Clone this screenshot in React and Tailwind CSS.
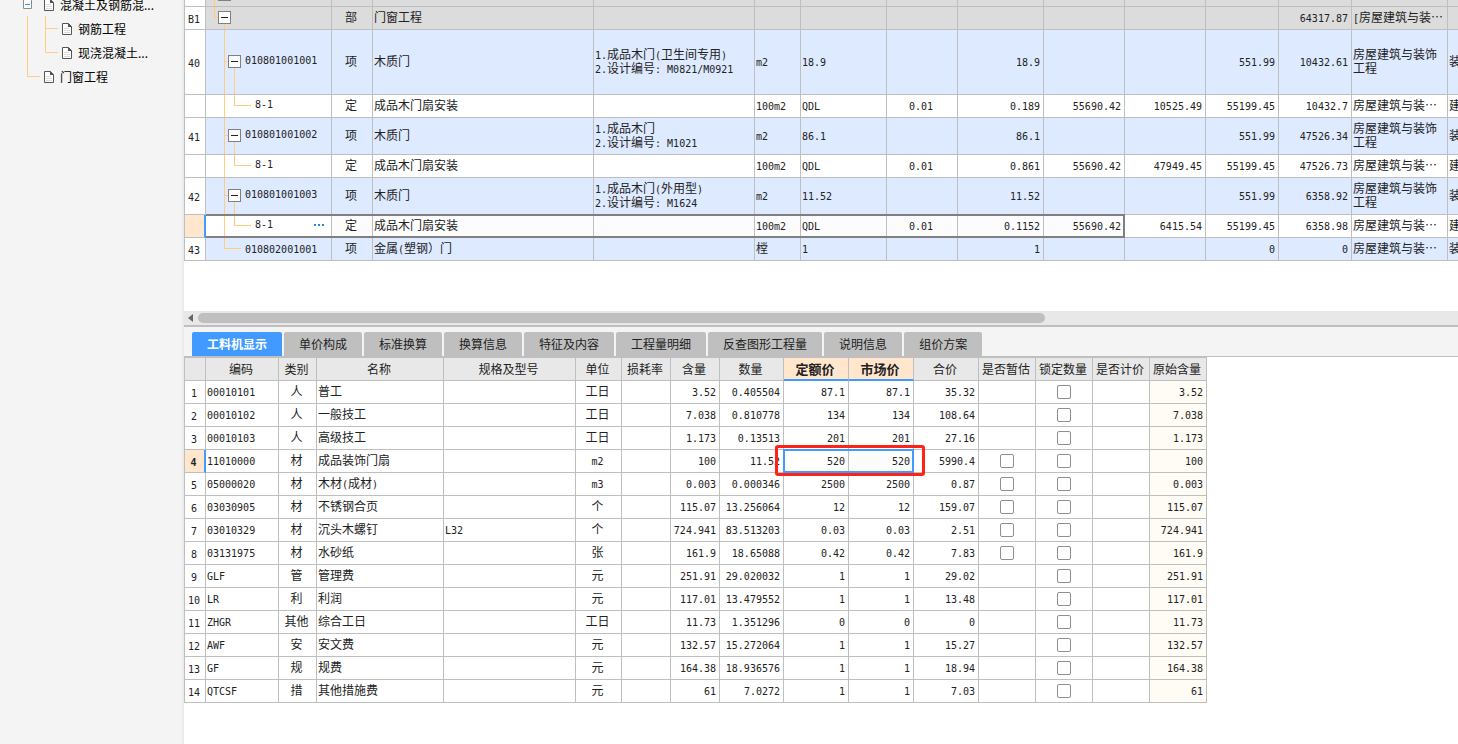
// src/App.jsx
import { Fragment } from "react";

const sections = [
  {
    no: "40", code: "010801001001", name: "木质门", feature: ["1.成品木门(卫生间专用)", "2.设计编号: M0821/M0921"], height: "h-[65px]",
    unit: "m2", qty: "18.9", total: "18.9", price: "551.99", sum: "10432.61",
    child: { total: "0.189", base: "55690.42", amount: "10525.49", price: "55199.45", sum: "10432.7" },
  },
  {
    no: "41", code: "010801001002", name: "木质门", feature: ["1.成品木门", "2.设计编号: M1021"], height: "h-[37px]",
    unit: "m2", qty: "86.1", total: "86.1", price: "551.99", sum: "47526.34",
    child: { total: "0.861", base: "55690.42", amount: "47949.45", price: "55199.45", sum: "47526.73" },
  },
  {
    no: "42", code: "010801001003", name: "木质门", feature: ["1.成品木门(外用型)", "2.设计编号: M1624"], height: "h-[37px]",
    unit: "m2", qty: "11.52", total: "11.52", price: "551.99", sum: "6358.92",
    child: { total: "0.1152", base: "55690.42", amount: "6415.54", price: "55199.45", sum: "6358.98", active: true },
  },
];

const tabs = ["工料机显示", "单价构成", "标准换算", "换算信息", "特征及内容", "工程量明细", "反查图形工程量", "说明信息", "组价方案"];

const headers = ["", "编码", "类别", "名称", "规格及型号", "单位", "损耗率", "含量", "数量", "定额价", "市场价", "合价", "是否暂估", "锁定数量", "是否计价", "原始含量"];

// code, type, name, spec, unit, content, quantity, quota price, market price, total
const resources = [
  ["00010101", "人", "普工", "", "工日", "3.52", "0.405504", "87.1", "87.1", "35.32"],
  ["00010102", "人", "一般技工", "", "工日", "7.038", "0.810778", "134", "134", "108.64"],
  ["00010103", "人", "高级技工", "", "工日", "1.173", "0.13513", "201", "201", "27.16"],
  ["11010000", "材", "成品装饰门扇", "", "m2", "100", "11.52", "520", "520", "5990.4"],
  ["05000020", "材", "木材(成材)", "", "m3", "0.003", "0.000346", "2500", "2500", "0.87"],
  ["03030905", "材", "不锈钢合页", "", "个", "115.07", "13.256064", "12", "12", "159.07"],
  ["03010329", "材", "沉头木螺钉", "L32", "个", "724.941", "83.513203", "0.03", "0.03", "2.51"],
  ["03131975", "材", "水砂纸", "", "张", "161.9", "18.65088", "0.42", "0.42", "7.83"],
  ["GLF", "管", "管理费", "", "元", "251.91", "29.020032", "1", "1", "29.02"],
  ["LR", "利", "利润", "", "元", "117.01", "13.479552", "1", "1", "13.48"],
  ["ZHGR", "其他", "综合工日", "", "工日", "11.73", "1.351296", "0", "0", "0"],
  ["AWF", "安", "安文费", "", "元", "132.57", "15.272064", "1", "1", "15.27"],
  ["GF", "规", "规费", "", "元", "164.38", "18.936576", "1", "1", "18.94"],
  ["QTCSF", "措", "其他措施费", "", "元", "61", "7.0272", "1", "1", "7.03"],
];

const topCols = [21, 126, 41, 221, 161, 46, 86, 71, 86, 81, 81, 73, 73, 96, 60];
const bottomCols = [21, 73, 38, 127, 132, 46, 49, 49, 64, 65, 65, 65, 57, 57, 57, 57];

// Latin runs use the half-width mono face, everything else stays CJK
function Text({ children }) {
  return String(children)
    .split(/([\x20-\x7e]+)/)
    .map((part, i) => (i % 2 ? <span key={i} className="font-['DejaVu_Sans_Mono',monospace] text-[10px] leading-none whitespace-pre">{part}</span> : <Fragment key={i}>{part}</Fragment>));
}

function Cell({ children, className = "" }) {
  return (
    <td className={`border-r border-b border-[#bfbfbf] overflow-hidden whitespace-nowrap pt-0 pr-[3px] pb-[2px] pl-px ${className}`}>
      {children != null && (typeof children === "string" ? <Text>{children}</Text> : children)}
    </td>
  );
}

function Cols({ widths }) {
  return (
    <colgroup>
      {widths.map((w, i) => (
        <col key={i} style={{ width: w }} />
      ))}
    </colgroup>
  );
}

function Toggle({ label, className = "" }) {
  return (
    <button aria-label={label} className={`relative flex size-[13px] shrink-0 items-center justify-center border border-[#808080] bg-white ${className}`}>
      <span className="h-px w-[7px] bg-[#222]" />
    </button>
  );
}

const lineColor = "bg-[#ffcc80]";

function ItemRow({ item }) {
  return (
    <tr className={`bg-[#deeaff] ${item.height}`}>
      <Cell className="bg-white pb-0! text-center">{item.no}</Cell>
      <Cell className="relative">
        <span className={`absolute inset-y-0 left-[18px] w-px ${lineColor}`} />
        <span className={`absolute top-1/2 left-[18px] -mt-px h-px w-1 ${lineColor}`} />
        <span className={`absolute top-1/2 bottom-0 left-[28px] w-px ${lineColor}`} />
        <div className="flex items-center gap-1 pl-[21px]">
          <Toggle label="收起" />
          <Text>{item.code}</Text>
        </div>
      </Cell>
      <Cell className="text-center">项</Cell>
      <Cell>{item.name}</Cell>
      <Cell className="leading-[14px]">
        {item.feature.map((line) => (
          <p key={line}><Text>{line}</Text></p>
        ))}
      </Cell>
      <Cell>{item.unit}</Cell>
      <Cell>{item.qty}</Cell>
      <Cell />
      <Cell className="text-right">{item.total}</Cell>
      <Cell />
      <Cell />
      <Cell className="text-right">{item.price}</Cell>
      <Cell className="text-right">{item.sum}</Cell>
      <Cell className="leading-[14px] whitespace-normal!">房屋建筑与装饰工程</Cell>
      <Cell>装饰工程</Cell>
    </tr>
  );
}

function ChildRow({ row }) {
  const tint = row.active ? "bg-[#fcfcfc]" : "";
  return (
    <tr className="h-[23px]">
      <Cell className={row.active ? "border-r-2 border-r-[#409aff] bg-[#ffe6cc]" : ""} />
      <Cell className="relative overflow-visible!">
        <span className={`absolute inset-y-0 left-[18px] w-px ${lineColor}`} />
        <span className="absolute top-0 left-[28px] h-[11px] w-[17px] border-b border-l border-[#ffcc80]" />
        {row.active && <span className="pointer-events-none absolute -top-px left-0 z-10 h-6 w-[919px] border-2 border-l-0 border-[#808080]" />}
        <div className="flex items-center justify-between pr-1 pl-12">
          <Text>8-1</Text>
          {row.active && (
            <button aria-label="更多" className="flex gap-[2px]">
              <span className="size-[2px] bg-[#2f86d0]" />
              <span className="size-[2px] bg-[#2f86d0]" />
              <span className="size-[2px] bg-[#2f86d0]" />
            </button>
          )}
        </div>
      </Cell>
      <Cell className={`text-center ${tint}`}>定</Cell>
      <Cell className={tint}>成品木门扇安装</Cell>
      <Cell className={tint} />
      <Cell className={tint}>100m2</Cell>
      <Cell className={tint}>QDL</Cell>
      <Cell className={`text-center ${tint}`}>0.01</Cell>
      <Cell className={`text-right ${tint}`}>{row.total}</Cell>
      <Cell className={`text-right ${tint}`}>{row.base}</Cell>
      <Cell className="text-right">{row.amount}</Cell>
      <Cell className="text-right">{row.price}</Cell>
      <Cell className="text-right">{row.sum}</Cell>
      <Cell>房屋建筑与装⋯</Cell>
      <Cell>建筑工程</Cell>
    </tr>
  );
}

function BillTable() {
  return (
    <table className="w-[1324px] table-fixed border-separate border-spacing-0 border-l border-[#bfbfbf] bg-white">
      <Cols widths={topCols} />
      <tbody>
        <tr className="h-[7px] bg-[#dcdcdc]">
          {topCols.map((_, i) => (
            <Cell key={i} className={i === 0 ? "bg-white" : i === 1 ? "relative" : ""}>
              {i === 1 && (
                <>
                  <span className={`absolute inset-y-0 left-2 w-px ${lineColor}`} />
                  <span className="absolute top-0 left-3 h-px w-[13px] bg-[#808080]" />
                </>
              )}
            </Cell>
          ))}
        </tr>
        <tr className="h-[23px] bg-[#dcdcdc]">
          <Cell className="bg-white pb-0! text-center">B1</Cell>
          <Cell className="relative">
            <span className="absolute top-0 left-2 h-[11px] w-1 border-b border-l border-[#ffcc80]" />
            <span className={`absolute top-1/2 bottom-0 left-[18px] w-px ${lineColor}`} />
            <Toggle label="收起" className="ml-[11px]" />
          </Cell>
          <Cell className="text-center">部</Cell>
          <Cell>门窗工程</Cell>
          {[4, 5, 6, 7, 8, 9, 10, 11].map((i) => (
            <Cell key={i} />
          ))}
          <Cell className="text-right">64317.87</Cell>
          <Cell>[房屋建筑与装⋯</Cell>
          <Cell />
        </tr>
        {sections.map((item) => (
          <Fragment key={item.no}>
            <ItemRow item={item} />
            <ChildRow row={item.child} />
          </Fragment>
        ))}
        <tr className="h-[23px] bg-[#deeaff]">
          <Cell className="bg-white pb-0! text-center">43</Cell>
          <Cell className="relative">
            <span className="absolute top-0 left-[18px] h-[11px] w-[17px] border-b border-l border-[#ffcc80]" />
            <div className="pl-[38px]"><Text>010802001001</Text></div>
          </Cell>
          <Cell className="text-center">项</Cell>
          <Cell>金属(塑钢）门</Cell>
          <Cell />
          <Cell>樘</Cell>
          <Cell>1</Cell>
          <Cell />
          <Cell className="text-right">1</Cell>
          <Cell />
          <Cell />
          <Cell className="text-right">0</Cell>
          <Cell className="text-right">0</Cell>
          <Cell>房屋建筑与装⋯</Cell>
          <Cell>装饰工程</Cell>
        </tr>
      </tbody>
    </table>
  );
}

function Check({ label }) {
  return <input type="checkbox" aria-label={label} className="mx-auto block size-[14px] appearance-none rounded-[2px] border border-[#8f8f8f] bg-white" />;
}

function ResourceTable() {
  return (
    <table className="w-[1023px] table-fixed border-separate border-spacing-0 border-l border-[#bfbfbf] bg-white">
      <Cols widths={bottomCols} />
      <thead>
        <tr className="h-6 bg-[#e8e8e8]">
          {headers.map((h, i) => (
            <th
              key={i}
              className={`border-t border-r border-b border-[#bfbfbf] p-0 pr-[2px] whitespace-nowrap ${i === 9 || i === 10 ? "border-b-2 border-b-[#409aff] bg-[#ffe6cc] text-[13px] font-bold" : "font-normal"}`}
            >
              {h}
            </th>
          ))}
        </tr>
      </thead>
      <tbody>
        {resources.map((r, i) => {
          const active = i === 3;
          return (
            <tr key={r[0]} className="h-[23px]">
              <Cell className={`pb-0! text-center ${active ? "border-r-2 border-r-[#409aff] bg-[#ffe6cc] font-bold" : ""}`}>{String(i + 1)}</Cell>
              <Cell>{r[0]}</Cell>
              <Cell className="text-center">{r[1]}</Cell>
              <Cell>{r[2]}</Cell>
              <Cell>{r[3]}</Cell>
              <Cell className="text-center">{r[4]}</Cell>
              <Cell />
              <Cell className="text-right">{r[5]}</Cell>
              <Cell className="text-right">{r[6]}</Cell>
              <Cell className={`text-right ${active ? "relative overflow-visible!" : ""}`}>
                <Text>{r[7]}</Text>
                {active && (
                  <>
                    <span className="absolute -top-px -left-px z-10 h-6 w-[131px] border-2 border-[#409aff]" />
                    <span className="absolute -top-[5px] -left-[9px] z-10 h-[31px] w-[150px] rounded-[3px] border-3 border-[#ff2216]" />
                  </>
                )}
              </Cell>
              <Cell className={`text-right ${active ? "bg-[#fcfcfc]" : ""}`}>{r[8]}</Cell>
              <Cell className="text-right">{r[9]}</Cell>
              <Cell className="px-0! pb-0!">{i > 2 && i < 8 && <Check label={`是否暂估 ${r[2]}`} />}</Cell>
              <Cell className="px-0! pb-0!">
                <Check label={`锁定数量 ${r[2]}`} />
              </Cell>
              <Cell />
              <Cell className="bg-[#fffbf5] text-right">{r[5]}</Cell>
            </tr>
          );
        })}
      </tbody>
    </table>
  );
}

function PageIcon() {
  return (
    <svg width="10" height="12" viewBox="0 0 10 12" fill="none" className="shrink-0">
      <path d="M.5 .5H6.5L9.5 3.5V11.5H.5Z" fill="#fff" stroke="#555" />
      <path d="M6 0L10 4H6Z" fill="#555" />
      <path d="M2 5.5H7M2 7.5H8M2 9.5H8" stroke="#ddd" />
    </svg>
  );
}

function TreeItem({ label, className = "" }) {
  return (
    <li className={`flex h-6 items-center gap-[6px] ${className}`}>
      <PageIcon />
      <a href="#" className="whitespace-nowrap text-black">{label}</a>
    </li>
  );
}

function Sidebar() {
  return (
    <aside className="relative w-[184px] shrink-0 overflow-hidden border-r-2 border-[#ebebeb] bg-[#f4f4f4]">
      <svg width="70" height="90" className="absolute top-0 left-0" fill="none">
        <path d="M27.5 16V76.5H40M45.5 16V52.5H58M45.5 28.5H58" stroke="#ffcc80" />
        <path d="M23.5 0V8.5H31.5V0" fill="#fff" stroke="#8c8c8c" />
        <path d="M25 4.5H30" stroke="#1ba1e2" />
      </svg>
      <ul className="-mt-[7px]">
        <TreeItem label="混凝土及钢筋混..." className="pl-11" />
        <TreeItem label="钢筋工程" className="pl-[62px]" />
        <TreeItem label="现浇混凝土..." className="pl-[62px]" />
        <TreeItem label="门窗工程" className="pl-11" />
      </ul>
    </aside>
  );
}

export default function App() {
  return (
    <div className="flex h-screen overflow-hidden bg-white font-['Noto_Sans_CJK_SC',sans-serif] text-[12px] leading-4 text-[#222]">
      <Sidebar />
      <main className="min-w-0 flex-1 overflow-hidden">
        <section className="h-[311px] overflow-hidden">
          <BillTable />
        </section>
        <div className="flex h-[14px] items-center bg-[#e8e8e8] pl-1">
          <svg width="6" height="8" viewBox="0 0 6 8" className="mr-1">
            <path d="M5 0V8L0 4Z" fill="#666" />
          </svg>
          <div className="h-[10px] w-2/3 rounded-full bg-[#bfbfbf]" />
        </div>
        <nav className="flex gap-[2px] border-t-2 border-b border-[#bfbfbf] bg-[#f4f4f4] pt-[5px] pl-2">
          {tabs.map((t, i) => (
            <button key={t} className={`h-6 rounded-t-[2px] px-[15px] whitespace-nowrap ${i === 0 ? "bg-[#409aff] font-bold text-white" : "bg-[#bfbfbf]"}`}>
              {t}
            </button>
          ))}
        </nav>
        <ResourceTable />
      </main>
    </div>
  );
}
